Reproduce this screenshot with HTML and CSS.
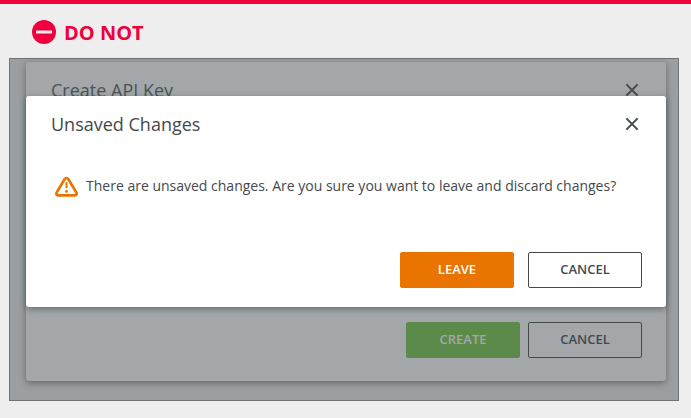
FILE: index.html
```html
<!DOCTYPE html>
<html lang="en">
<head>
  <meta charset="UTF-8">
  <meta name="viewport" content="width=device-width, initial-scale=1.0">
  <title>Modal stacking - Do not</title>
  <link rel="stylesheet" href="styles.css">
</head>
<body>
  <div class="example">
    <h2 class="example-title">
      <svg class="example-icon" width="24" height="24" viewBox="0 0 24 24">
        <circle cx="12" cy="12" r="12" fill="#f0003c"/>
        <rect x="4" y="10.5" width="16" height="3" fill="#eee"/>
      </svg>
      Do not
    </h2>

    <div class="screen">
      <!-- Modal in the background -->
      <div class="modal modal-back">
        <div class="modal-header">
          <span class="modal-title">Create API Key</span>
          <svg class="close" width="12" height="12" viewBox="0 0 12 12">
            <path d="M0.4 0.4L11.6 11.6M11.6 0.4L0.4 11.6"/>
          </svg>
        </div>
        <div class="modal-footer">
          <button class="btn btn-create">Create</button>
          <button class="btn btn-cancel">Cancel</button>
        </div>
      </div>

      <!-- Confirmation on top of it -->
      <div class="modal modal-front">
        <div class="modal-header">
          <span class="modal-title">Unsaved Changes</span>
          <svg class="close" width="12" height="12" viewBox="0 0 12 12">
            <path d="M0.4 0.4L11.6 11.6M11.6 0.4L0.4 11.6"/>
          </svg>
        </div>
        <div class="modal-body">
          <svg class="warning" width="24" height="22" viewBox="0 0 24 22">
            <path d="M9.6 3.2Q11.5 0.8 13.4 3.2L21.4 16.6Q22.3 19.2 19.9 19.4H3.1Q0.7 19.2 1.6 16.6Z" fill="none" stroke="#e97500" stroke-width="2.7" stroke-linejoin="round"/>
            <path d="M11.5 6.2V12.2" stroke="#e97500" stroke-width="2"/>
            <circle cx="11.5" cy="15.4" r="1.4" fill="#e97500"/>
          </svg>
          <p class="message">There are unsaved changes. Are you sure you want to leave and discard changes?</p>
        </div>
        <div class="modal-footer">
          <button class="btn btn-leave">Leave</button>
          <button class="btn btn-cancel">Cancel</button>
        </div>
      </div>
    </div>
  </div>
</body>
</html>
```

FILE: styles.css
```css
* {
  box-sizing: border-box;
}

body {
  margin: 0;
  background-color: #eee;
  font-family: "Open Sans", sans-serif;
  color: #43494d;
}

.example {
  height: 418px;
  border-top: 4px solid #f0003c;
  padding: 0 12px 0 9px;
}

.example-title {
  display: flex;
  align-items: center;
  gap: 8px;
  height: 54px;
  margin: 0;
  padding: 2px 0 0 23px;
  font-size: 20px;
  font-weight: 700;
  text-transform: uppercase;
  color: #f0003c;
}

/* Dimmed page behind the modals */
.screen {
  position: relative;
  height: 343px;
  padding: 3px 12px 0 16px;
  border: 1px solid #707374;
  background-color: #9b9fa2;
}

/* Modals */
.modal {
  display: flex;
  flex-direction: column;
  width: 640px;
  border-radius: 3px;
  box-shadow: 0 2px 6px rgba(40, 50, 54, 0.5);
}

.modal-back {
  height: 319px;
  padding-bottom: 23px;
  background-color: #a3a7aa;
}

.modal-front {
  position: absolute;
  top: 37px;
  left: 16px;
  height: 211px;
  padding-bottom: 19px;
  background-color: #fff;
}

.modal-header {
  display: flex;
  align-items: center;
  justify-content: space-between;
  height: 56px;
  padding: 0 28px 0 25px;
}

.modal-title {
  font-size: 18px;
}

.modal-back .modal-title {
  color: #4c5256;
}

.close {
  overflow: visible;
  fill: none;
  stroke: #43494d;
  stroke-width: 2;
}

.modal-body {
  display: flex;
  align-items: center;
  gap: 7px;
  padding: 24px 28px 0 29px;
}

.message {
  margin: 0;
  padding-bottom: 2px;
  font-size: 14px;
  line-height: 20px;
}

.modal-footer {
  display: flex;
  justify-content: flex-end;
  gap: 14px;
  margin-top: auto;
  padding: 0 24px;
}

.modal-back .modal-footer {
  gap: 8px;
}

/* Buttons */
.btn {
  width: 114px;
  height: 36px;
  padding: 0 0 2px;
  border: 1px solid transparent;
  border-radius: 2px;
  font-family: inherit;
  font-size: 13px;
  font-weight: 600;
  text-transform: uppercase;
}

.btn-leave {
  border-color: #e97500;
  background-color: #e97500;
  color: #fff;
}

.btn-create {
  border-color: #5c8a4a;
  background-color: #5c8a4a;
  color: #a3a7aa;
}

.btn-cancel {
  border-color: #43494d;
  background-color: transparent;
  color: #43494d;
}
```
